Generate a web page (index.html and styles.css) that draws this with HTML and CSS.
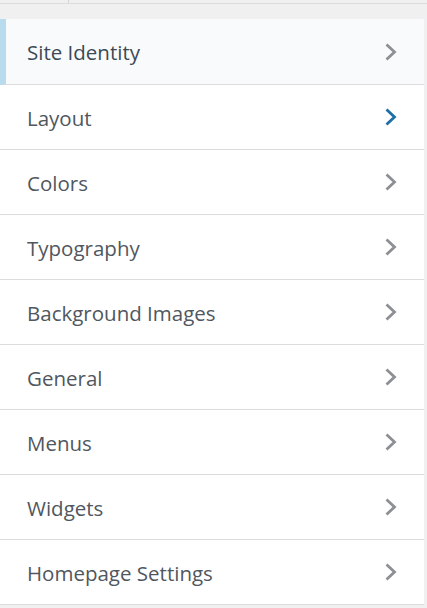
FILE: index.html
```html
<!DOCTYPE html>
<html lang="en">
<head>
    <meta charset="UTF-8">
    <meta name="viewport" content="width=device-width, initial-scale=1.0">
    <title>Customize</title>
    <link rel="stylesheet" href="styles.css">
</head>
<body>
    <div class="topbar">
        <div class="topbar-strip"><span class="tick"></span></div>
    </div>
    <ul class="sections">
        <li class="section current"><span>Site Identity</span>
            <svg class="chev" viewBox="0 0 16 20"><path d="M3.5 2.5 L11.5 10 L3.5 17.5"/></svg></li>
        <li class="section hover"><span>Layout</span>
            <svg class="chev" viewBox="0 0 16 20"><path d="M3.5 2.5 L11.5 10 L3.5 17.5"/></svg></li>
        <li class="section"><span>Colors</span>
            <svg class="chev" viewBox="0 0 16 20"><path d="M3.5 2.5 L11.5 10 L3.5 17.5"/></svg></li>
        <li class="section"><span>Typography</span>
            <svg class="chev" viewBox="0 0 16 20"><path d="M3.5 2.5 L11.5 10 L3.5 17.5"/></svg></li>
        <li class="section"><span>Background Images</span>
            <svg class="chev" viewBox="0 0 16 20"><path d="M3.5 2.5 L11.5 10 L3.5 17.5"/></svg></li>
        <li class="section"><span>General</span>
            <svg class="chev" viewBox="0 0 16 20"><path d="M3.5 2.5 L11.5 10 L3.5 17.5"/></svg></li>
        <li class="section"><span>Menus</span>
            <svg class="chev" viewBox="0 0 16 20"><path d="M3.5 2.5 L11.5 10 L3.5 17.5"/></svg></li>
        <li class="section"><span>Widgets</span>
            <svg class="chev" viewBox="0 0 16 20"><path d="M3.5 2.5 L11.5 10 L3.5 17.5"/></svg></li>
        <li class="section"><span>Homepage Settings</span>
            <svg class="chev" viewBox="0 0 16 20"><path d="M3.5 2.5 L11.5 10 L3.5 17.5"/></svg></li>
    </ul>
</body>
</html>
```

FILE: styles.css
```css
body {
    margin: 0;
    padding: 0;
    background-color: #f0f0f1;
    font-family: "Open Sans", "Noto Sans", sans-serif;
}

.topbar {
    height: 19px;
}

.topbar-strip {
    height: 3px;
    border-bottom: 1px solid #dcdcde;
    position: relative;
}

.tick {
    position: absolute;
    left: 68px;
    top: 0;
    width: 1px;
    height: 3px;
    background: #d5d5d8;
}

.sections {
    list-style: none;
    margin: 0;
    padding: 0;
    width: 424px;
}

.section {
    display: flex;
    justify-content: space-between;
    align-items: center;
    height: 64px;
    padding: 0 25px 0 27px;
    background: #ffffff;
    border-bottom: 1px solid #dcdcde;
    box-sizing: content-box;
    font-size: 20.5px;
    color: #50575e;
}

.section:first-child {
    height: 65px;
}

.section span {
    margin-top: 1px;
}

.section.current {
    background: #f9fafc;
    border-left: 6px solid #b8dcee;
    padding-left: 21px;
    color: #3c4a55;
}

.chev {
    width: 16px;
    height: 20px;
    fill: none;
    stroke: #8c8f94;
    stroke-width: 2.8;
}

.section.hover .chev {
    stroke: #1d6fa5;
}
```
